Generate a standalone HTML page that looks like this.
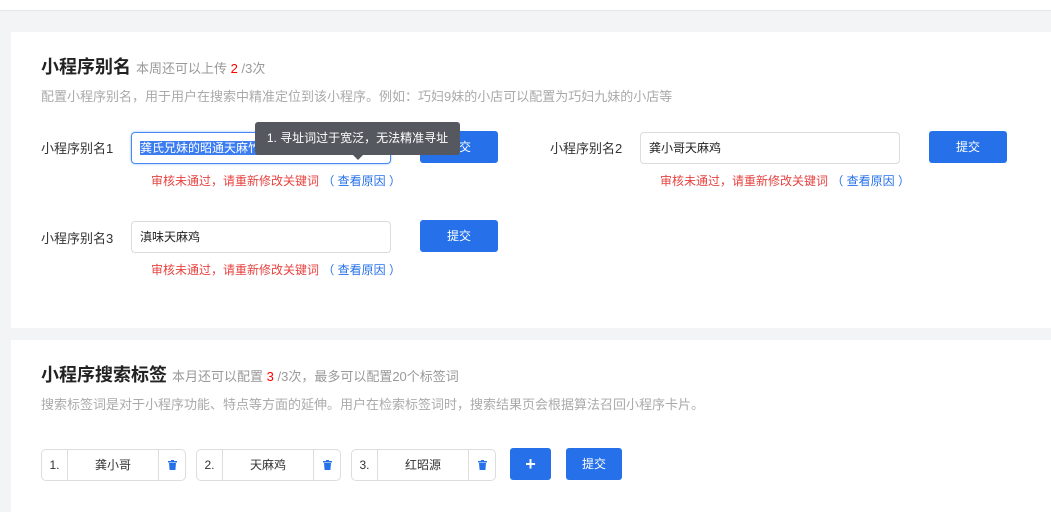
<!DOCTYPE html><html><head><meta charset="utf-8"><style>
*{box-sizing:border-box;margin:0;padding:0}
body{width:1051px;height:512px;background:#f3f4f5;font-family:"Liberation Sans","Noto Sans CJK SC",sans-serif;position:relative;overflow:hidden;color:#333}
.abs{position:absolute}
.top{left:0;top:0;width:1051px;height:11px;background:#fff;border-bottom:1px solid #e4e6ea}
.card{background:#fff;left:11px;width:1040px}
.title{font-size:18px;font-weight:bold;color:#222}
.sub{font-size:13px;color:#999;font-weight:normal}
.red{color:#f00}
.desc{font-size:13px;color:#aaa}
.lbl{font-size:13px;color:#333}
.inp{height:32px;width:260px;border:1px solid #dcdcdc;border-radius:4px;font-size:12px;padding-left:8px;line-height:30px;color:#222}
.btn{background:#2671ea;color:#fff;font-size:12px;text-align:center;border-radius:3px;line-height:32px;height:32px}
.err{font-size:12px;color:#e64340}
.err span{color:#2671ea}
.tag{height:32px;width:145px;border:1px solid #ddd;border-radius:5px;display:flex;font-size:12px;line-height:30px;background:#fff}
.tag .n{width:26px;text-align:center;border-right:1px solid #ddd}
.tag .v{flex:1;text-align:center;border-right:1px solid #ddd}
.tag .d{width:26px;display:flex;align-items:center;justify-content:center}
</style></head><body>
<div class="abs top"></div>
<div class="abs card" style="top:32px;height:296px"></div>
<div class="abs card" style="top:340px;height:172px"></div>

<div class="abs title" style="left:41px;top:53px">小程序别名 <span class="sub">本周还可以上传 <span class="red">2</span> /3次</span></div>
<div class="abs desc" style="left:41px;top:86px">配置小程序别名，用于用户在搜索中精准定位到该小程序。例如：巧妇9妹的小店可以配置为巧妇九妹的小店等</div>

<div class="abs lbl" style="left:41px;top:138px">小程序别名1</div>
<div class="abs inp" style="left:131px;top:132px;border-color:#4a8af4;box-shadow:0 0 2px #8ab4f8"><span style="background:#3b7cf0;color:#fff">龚氏兄妹的昭通天麻竹荪火腿鸡汤火锅</span></div>
<div class="abs btn" style="left:420px;top:131px;width:78px">提交</div>
<div class="abs err" style="left:151px;top:172px">审核未通过，请重新修改关键词 <span>（ 查看原因 ）</span></div>

<div class="abs" style="left:255px;top:122px;width:205px;height:33px;background:#55585f;border-radius:3px;color:#fff;font-size:12px;line-height:32px;text-align:center">1. 寻址词过于宽泛，无法精准寻址</div>
<div class="abs" style="left:353px;top:155px;width:0;height:0;border-left:5px solid transparent;border-right:5px solid transparent;border-top:5px solid #55585f"></div>

<div class="abs lbl" style="left:550px;top:138px">小程序别名2</div>
<div class="abs inp" style="left:640px;top:132px">龚小哥天麻鸡</div>
<div class="abs btn" style="left:929px;top:131px;width:78px">提交</div>
<div class="abs err" style="left:660px;top:172px">审核未通过，请重新修改关键词 <span>（ 查看原因 ）</span></div>

<div class="abs lbl" style="left:41px;top:228px">小程序别名3</div>
<div class="abs inp" style="left:131px;top:221px">滇味天麻鸡</div>
<div class="abs btn" style="left:420px;top:220px;width:78px">提交</div>
<div class="abs err" style="left:151px;top:261px">审核未通过，请重新修改关键词 <span>（ 查看原因 ）</span></div>

<div class="abs title" style="left:41px;top:361px">小程序搜索标签 <span class="sub">本月还可以配置 <span class="red">3</span> /3次，最多可以配置20个标签词</span></div>
<div class="abs desc" style="left:41px;top:394px">搜索标签词是对于小程序功能、特点等方面的延伸。用户在检索标签词时，搜索结果页会根据算法召回小程序卡片。</div>

<div class="abs tag" style="left:41px;top:449px"><div class="n">1.</div><div class="v">龚小哥</div><div class="d"><svg width="9" height="10" viewBox="0 0 9 10"><rect x="0" y="1" width="9" height="1.5" fill="#2671ea"/><rect x="3" y="0" width="3" height="1.5" fill="#2671ea"/><path d="M1 3h7l-.6 7H1.6z" fill="#2671ea"/></svg></div></div>
<div class="abs tag" style="left:196px;top:449px"><div class="n">2.</div><div class="v">天麻鸡</div><div class="d"><svg width="9" height="10" viewBox="0 0 9 10"><rect x="0" y="1" width="9" height="1.5" fill="#2671ea"/><rect x="3" y="0" width="3" height="1.5" fill="#2671ea"/><path d="M1 3h7l-.6 7H1.6z" fill="#2671ea"/></svg></div></div>
<div class="abs tag" style="left:351px;top:449px"><div class="n">3.</div><div class="v">红昭源</div><div class="d"><svg width="9" height="10" viewBox="0 0 9 10"><rect x="0" y="1" width="9" height="1.5" fill="#2671ea"/><rect x="3" y="0" width="3" height="1.5" fill="#2671ea"/><path d="M1 3h7l-.6 7H1.6z" fill="#2671ea"/></svg></div></div>
<div class="abs btn" style="left:510px;top:448px;width:41px;font-size:18px;font-weight:bold">+</div>
<div class="abs btn" style="left:566px;top:448px;width:56px">提交</div>
</body></html>
